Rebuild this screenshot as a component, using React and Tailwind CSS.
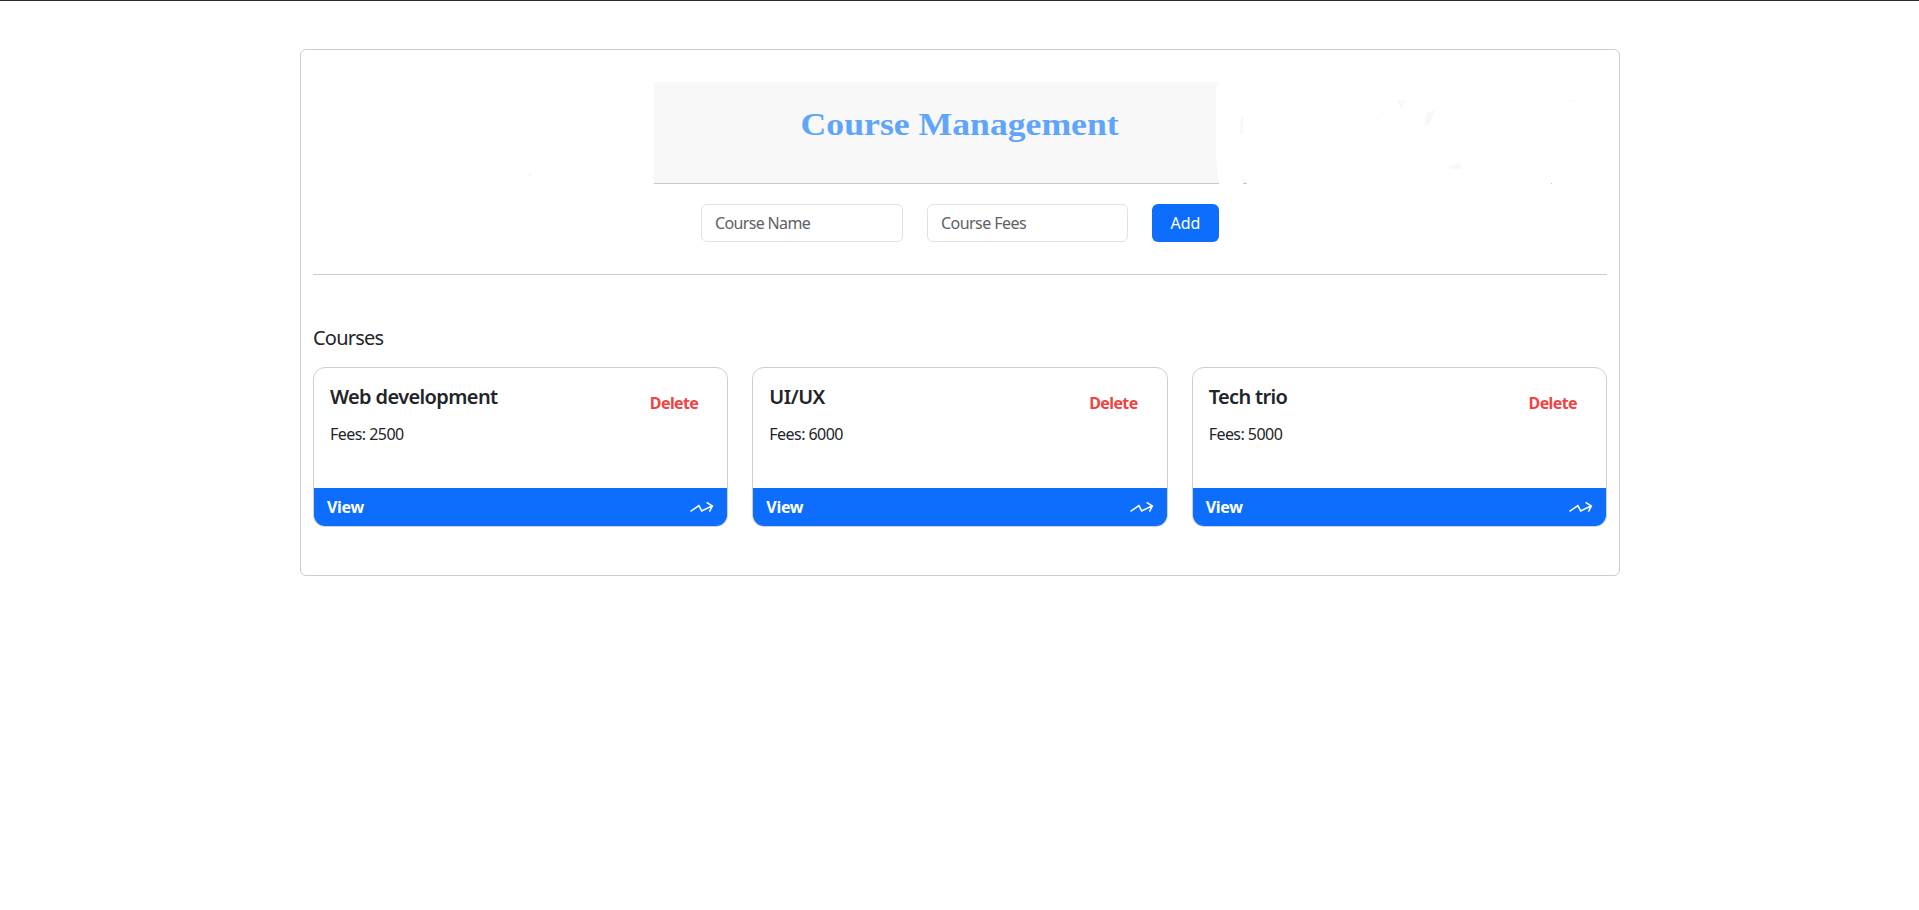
const courses = [
  { name: 'Web development', fees: 2500, spacing: 'tracking-[-0.62px]' },
  { name: 'UI/UX', fees: 6000, spacing: 'tracking-[-0.5px]' },
  { name: 'Tech trio', fees: 5000, spacing: 'tracking-[-0.65px]' },
];

function ZigzagArrow() {
  return (
    <svg className="h-[12px] w-[24px]" viewBox="0 0 24 12" fill="none" stroke="white" strokeWidth="1.5">
      <path d="M0.5 10.4 L8.9 4.6 L11.7 9.9 L22 5 M16.6 1.3 L22.4 5 L19.4 10.6" />
    </svg>
  );
}

function CourseCard({ course }) {
  return (
    <article className="flex h-[160px] flex-col overflow-hidden rounded-[12px] border border-[#cfcfd0] bg-white">
      <div className="flex flex-1 justify-between pl-4 pr-[29px] pt-[17px]">
        <div>
          <h2 className={`text-[20px] leading-6 font-semibold ${course.spacing}`}>{course.name}</h2>
          <p className="mt-[13px] text-[16px] leading-6 tracking-[-0.55px]">Fees: {course.fees}</p>
        </div>
        <button className="mt-[6px] h-6 text-[16px] leading-6 font-bold tracking-[-0.6px] text-[#ef4444]">Delete</button>
      </div>
      <div className="flex h-[38px] items-center justify-between bg-[#0d6efd] pl-[13px] pr-[13px] text-white">
        <span className="text-[16px] leading-6 font-bold tracking-[-0.3px]">View</span>
        <ZigzagArrow />
      </div>
    </article>
  );
}

export default function App() {
  return (
    <main className="h-[910px] border-t border-[#2b2a33] bg-white px-[300px] pt-12 font-['Noto_Sans',sans-serif] text-[#212529]">
      <section className="h-[527px] w-[1320px] rounded-[6px] border border-[#cccccc] px-3 pt-8">
        <header className="relative flex h-[102px] justify-center pt-[24px]">
          <svg className="absolute inset-0 h-[102px] w-[1294px]" viewBox="0 0 1294 102">
            <g fill="#f8f8f8">
              <path d="M341 0H906Q903 5 903 14V75L906 101H341Z" />
              <path d="M928 33L931 35Q929 43 930 52H927Z M930 94L935 101H930Z" />
              <path d="M1083 18H1093.5L1088.5 27Z M1111.7 44L1112.5 32L1116 30L1123.5 28Q1119 32 1117.5 41Z M1134 85.5L1148 80.5V87H1140Z M1252 18H1261L1263 20Z M1060 36L1064 36L1066 38Z M213 93L219 90V95Z" />
            </g>
            <path d="M341 101.5H906M930 101.5H934M1238 101.5H1239" stroke="#c8c9ca" />
          </svg>
          <h1 className="relative h-9 scale-x-[1.115] whitespace-nowrap font-['Liberation_Serif',serif] text-[32px] leading-9 font-bold text-[#60a5fa]">Course Management</h1>
        </header>
        <form className="mt-5 flex gap-6 pl-[388px]">
          <input className="h-[38px] w-[202px] rounded-[6px] border border-[#dee2e6] px-[13px] text-[16px] tracking-[-0.65px] placeholder:text-[#5c6166]" placeholder="Course Name" />
          <input className="h-[38px] w-[201px] rounded-[6px] border border-[#dee2e6] px-[13px] text-[16px] tracking-[-0.55px] placeholder:text-[#5c6166]" placeholder="Course Fees" />
          <button type="button" className="h-[38px] w-[67px] rounded-[6px] bg-[#0d6efd] text-[16px] text-white">Add</button>
        </form>
        <div className="mt-8 h-px bg-[#c8c9ca]" />
        <h2 className="mt-[51px] text-[20px] leading-6 tracking-[-0.8px]">Courses</h2>
        <div className="mt-[17px] grid grid-cols-3 gap-6">
          {courses.map((course) => <CourseCard key={course.name} course={course} />)}
        </div>
      </section>
    </main>
  );
}
